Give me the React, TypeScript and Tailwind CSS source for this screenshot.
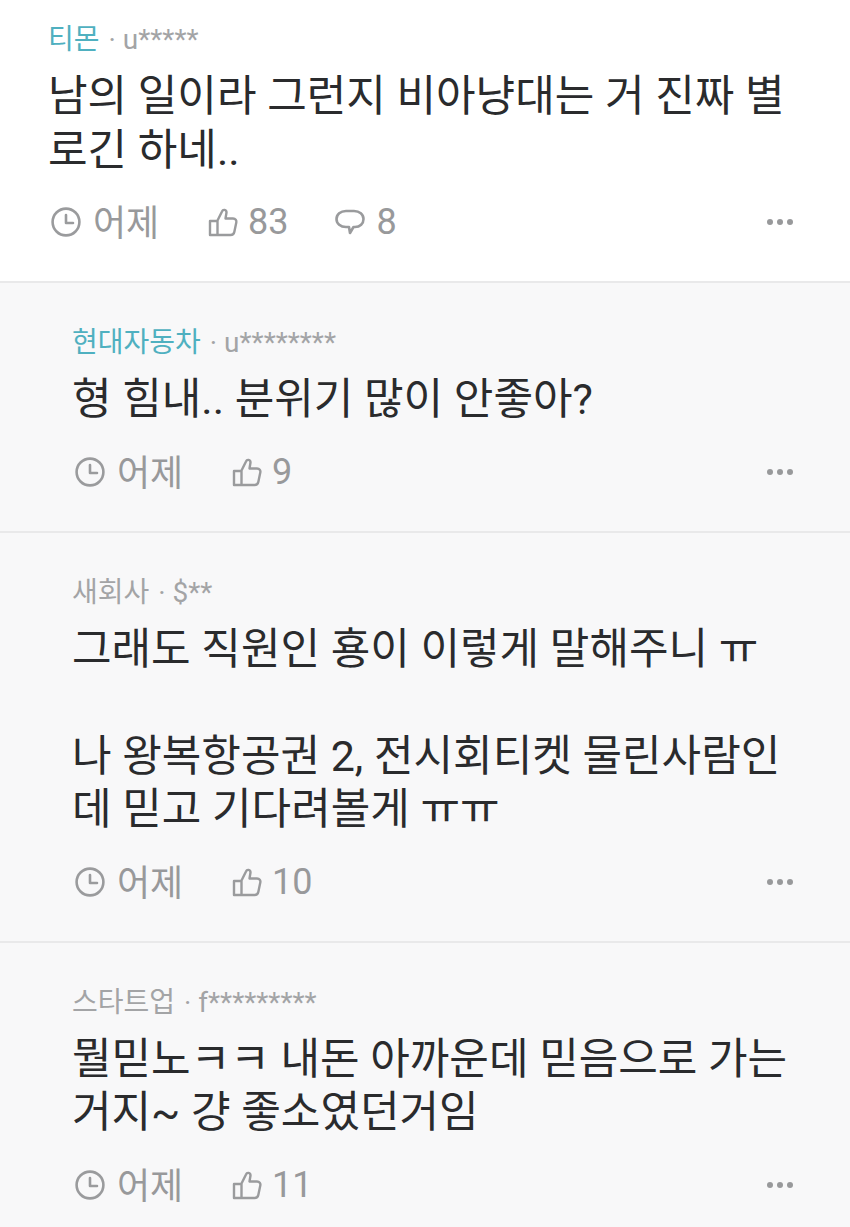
const font = { fontFamily: '"Roboto", "Noto Sans CJK KR", sans-serif' };

function Clock() {
  return (
    <svg width="30" height="30" viewBox="0 0 30 30" fill="none" stroke="#9a9b9d" strokeWidth="2.6" strokeLinecap="round" strokeLinejoin="round" className="shrink-0">
      <circle cx="15" cy="15" r="13.400" />
      <path d="M15 8v8h7" />
    </svg>
  );
}

function Thumb() {
  return (
    <svg width="30" height="30" viewBox="0 0 30 30" fill="none" stroke="#9a9b9d" strokeWidth="2.4" strokeLinecap="round" strokeLinejoin="round" className="shrink-0">
      <path d="M9.500 13.500 14 4.500C15 2 18.500 2.500 18.500 5.500L17.500 11.500H25C27.500 11.500 28.800 13.200 28.300 15.500L26.300 25C25.900 27 24.500 28 22.500 28H2V14H9.500V28" />
    </svg>
  );
}

function Bubble() {
  return (
    <svg width="30" height="30" viewBox="0 0 30 30" fill="none" stroke="#9a9b9d" strokeWidth="2.6" strokeLinecap="round" strokeLinejoin="round" className="shrink-0">
      <path d="M11 4h8c5.500 0 9.500 3.300 9.500 8s-3.500 8-8.500 8h-1.500l-3.500 6-1-6H11C5.500 20 1.500 16.700 1.500 12S5.500 4 11 4z" />
    </svg>
  );
}

function Dots() {
  return (
    <div className="ml-auto flex gap-[4px]">
      <span className="h-[6px] w-[6px] rounded-full bg-[#98999b]" />
      <span className="h-[6px] w-[6px] rounded-full bg-[#98999b]" />
      <span className="h-[6px] w-[6px] rounded-full bg-[#98999b]" />
    </div>
  );
}

type Item = {
  company: string;
  user: string;
  teal?: boolean;
  lines: string[];
  likes: string;
  replies?: string;
};

const items: Item[] = [
  { company: "현대자동차", user: "u********", teal: true, lines: ["형 힘내.. 분위기 많이 안좋아?"], likes: "9" },
  { company: "새회사", user: "$**", lines: ["그래도 직원인 횽이 이렇게 말해주니 ㅠ", "", "나 왕복항공권 2, 전시회티켓 물린사람인", "데 믿고 기다려볼게 ㅠㅠ"], likes: "10" },
  { company: "스타트업", user: "f*********", lines: ["뭘믿노ㅋㅋ 내돈 아까운데 믿음으로 가는", "거지~ 걍 좋소였던거임"], likes: "11" },
];

function Comment({ item, top }: { item: Item; top?: boolean }) {
  return (
    <section className={top ? "bg-white pl-[48px] pr-[57px] pt-[20px] pb-[37px] border-b-2 border-[#e9e9ea]" : "bg-[#f8f8f9] pl-[72px] pr-[57px] pt-[40px] pb-[37px] border-b-2 border-[#e9e9ea] last:border-b-0"}>
      <div className="flex items-center h-[40px] text-[28px] text-[#a3a4a6]">
        <span className={item.teal ? "text-[#4fb0c0]" : ""}>{item.company}</span>
        <span className="ml-[9px]">· {item.user}</span>
      </div>
      <div className="mt-[10px] text-[43px] leading-[53.5px] text-[#2a2b2d]">
        {item.lines.map((l, i) => (
          <div key={i} className="h-[53.5px] whitespace-pre">{l}</div>
        ))}
      </div>
      <div className="mt-[23px] flex items-center h-[44px] text-[36px] text-[#98999b]">
        <span className="ml-[3px]"><Clock /></span>
        <span className="ml-[12px] w-[115px] pt-[4px]">어제</span>
        <Thumb />
        <span className="ml-[10px]">{item.likes}</span>
        {item.replies && (
          <>
            <span className="ml-[47px]"><Bubble /></span>
            <span className="ml-[11px]">{item.replies}</span>
          </>
        )}
        <Dots />
      </div>
    </section>
  );
}

export default function App() {
  return (
    <div style={font} className="w-[850px] h-[1227px] overflow-hidden bg-[#f8f8f9]">
      <Comment top item={{ company: "티몬", user: "u*****", teal: true, lines: ["남의 일이라 그런지 비아냥대는 거 진짜 별", "로긴 하네.."], likes: "83", replies: "8" }} />
      {items.map((it) => (
        <Comment key={it.company} item={it} />
      ))}
    </div>
  );
}
